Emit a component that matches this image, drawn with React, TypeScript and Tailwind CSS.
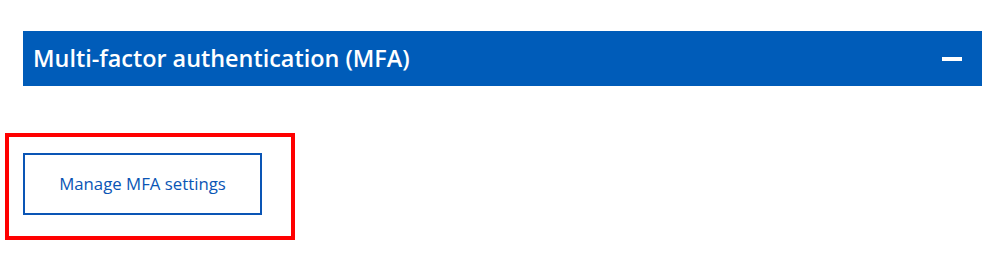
export default function App() {
  return (
    <div className="h-[267px] w-[1000px] bg-white pt-[31px] font-['Open_Sans',sans-serif]">
      <div className="ml-[23px] mr-[18px] flex h-[55px] items-center justify-between bg-[#005cb9] pl-[10px] pr-[20px]">
        <h2 className="text-[23.4px] font-semibold text-white">Multi-factor authentication (MFA)</h2>
        <span className="block h-[4px] w-[20px] bg-white" />
      </div>
      <div className="ml-[5px] mt-[47px] h-[107px] w-[290px] border-[4px] border-[#ff0000] pl-[14px] pt-[16px]">
        <button className="flex h-[62px] w-[239px] items-center justify-center border-2 border-[#0a55b5] text-[16.8px] font-medium text-[#0a55b5]">
          Manage MFA settings
        </button>
      </div>
    </div>
  );
}
